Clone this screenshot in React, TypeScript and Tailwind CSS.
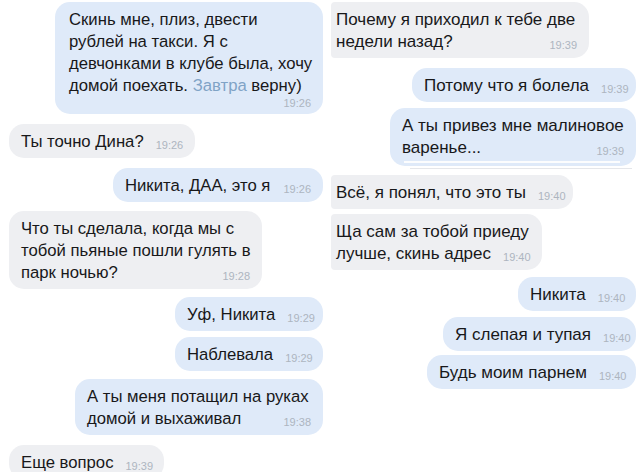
import React from "react";

type BubbleProps = {
  out?: boolean;
  cut?: boolean;
  className: string;
  lines: React.ReactNode[];
  time: string;
  timeOwnLine?: boolean;
};

function Bubble({ out, cut, className, lines, time, timeOwnLine }: BubbleProps) {
  const base =
    "relative pt-[7px] pb-[5px] leading-[22px] text-[#18181a] " +
    (out
      ? "self-end bg-[#dfeaf9] rounded-[15px] pl-[12px] pr-[12px] "
      : cut
      ? "self-start bg-[#eeeff2] rounded-r-[15px] rounded-l-[4px] pl-[5px] pr-[12px] "
      : "self-start bg-[#eeeff2] rounded-[15px] pl-[12px] pr-[12px] ");
  const head = lines.slice(0, -1);
  const last = lines[lines.length - 1];
  return (
    <div className={base + className}>
      {head.map((l, i) => (
        <div key={i} className="whitespace-nowrap h-[22px]">
          {l}
        </div>
      ))}
      {timeOwnLine ? (
        <>
          <div className="whitespace-nowrap h-[22px]">{last}</div>
          <div className="flex justify-end h-[12px] text-[11px] leading-[12px] text-[#adb5c0]">{time}</div>
        </>
      ) : (
        <div className="flex items-baseline justify-between gap-3 h-[22px]">
          <span className="whitespace-nowrap">{last}</span>
          <span className="text-[11px] leading-[12px] text-[#adb5c0] translate-y-[2px]">{time}</span>
        </div>
      )}
    </div>
  );
}

export default function App() {
  return (
    <div
      className="w-[640px] h-[472px] overflow-hidden bg-white flex"
      style={{ fontFamily: '"Liberation Sans", Arial, sans-serif' }}
    >
      {/* Left column */}
      <div className="w-[326px] flex flex-col pl-[9px] pr-[3px] text-[16.7px]">
        <Bubble
          out
          className="mt-[2px] w-[268px] pl-[14px] pb-[4px]"
          lines={[
            "Скинь мне, плиз, двести",
            "рублей на такси. Я с",
            "девчонками в клубе была, хочу",
            <>
              домой поехать. <span className="text-[#7fa3c6]">Завтра</span> верну)
            </>,
          ]}
          time="19:26"
          timeOwnLine
        />
        <Bubble className="mt-[10px] w-[186px]" lines={["Ты точно Дина?"]} time="19:26" />
        <Bubble out className="mt-[10px] w-[210px]" lines={["Никита, ДАА, это я"]} time="19:26" />
        <Bubble
          className="mt-[9px] w-[253px]"
          lines={["Что ты сделала, когда мы с", "тобой пьяные пошли гулять в", "парк ночью?"]}
          time="19:28"
        />
        <Bubble out className="mt-[8px] w-[148px]" lines={["Уф, Никита"]} time="19:29" />
        <Bubble out className="mt-[6px] w-[148px]" lines={["Наблевала"]} time="19:29" />
        <Bubble
          out
          className="mt-[8px] w-[248px]"
          lines={["А ты меня потащил на руках", "домой и выхаживал"]}
          time="19:38"
        />
        <Bubble className="mt-[10px] w-[155px]" lines={["Еще вопрос"]} time="19:39" />
      </div>

      {/* Right column */}
      <div className="flex-1 flex flex-col pl-[5px] pr-[4px] text-[17px]">
        <Bubble
          cut
          className="mt-[2px] w-[258px]"
          lines={["Почему я приходил к тебе две", "недели назад?"]}
          time="19:39"
        />
        <Bubble out className="mt-[10px] w-[224px] pr-[8px]" lines={["Потому что я болела"]} time="19:39" />
        <div className="relative self-end mt-[6px]">
          <Bubble
            out
            className="w-[246px] pr-[8px] pb-[7px]"
            lines={["А ты привез мне малиновое", "варенье..."]}
            time="19:39"
          />
          <div className="absolute left-[14px] right-[16px] bottom-[3px] h-[2px] bg-white/90" />
          <div className="absolute left-[20px] right-[4px] -bottom-[3px] h-[1px] bg-[#e4e6ea]" />
        </div>
        <Bubble cut className="mt-[9px] w-[242px]" lines={["Всё, я понял, что это ты"]} time="19:40" />
        <Bubble
          cut
          className="mt-[5px] w-[211px]"
          lines={["Ща сам за тобой приеду", "лучше, скинь адрес"]}
          time="19:40"
        />
        <Bubble out className="mt-[7px] w-[118px] pr-[8px]" lines={["Никита"]} time="19:40" />
        <Bubble out className="mt-[6px] w-[193px] pr-[8px]" lines={["Я слепая и тупая"]} time="19:40" />
        <Bubble out className="mt-[4px] w-[209px] pr-[8px]" lines={["Будь моим парнем"]} time="19:40" />
      </div>
    </div>
  );
}
